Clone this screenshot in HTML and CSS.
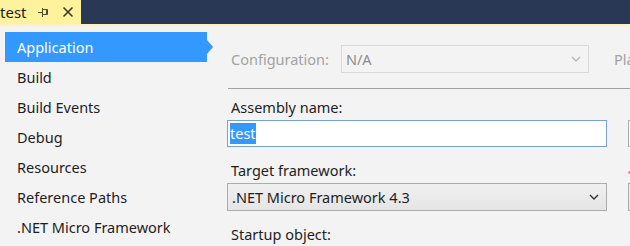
FILE: index.html
```html
<!DOCTYPE html>
<html lang="en">
<head>
    <meta charset="UTF-8">
    <title>test - Properties</title>
    <link rel="stylesheet" href="styles.css">
</head>
<body>
    <div class="tabbar">
        <div class="doc-tab">
            <span class="tab-title">test</span>
            <svg class="pin" width="12" height="12" viewBox="0 0 12 12">
                <path d="M0 6.5h4M4.5 2v9M4.5 3.5h5v5h-5M8.5 3.5v5" stroke="#4d4a30" stroke-width="1" fill="none"/>
            </svg>
            <svg class="close" width="12" height="12" viewBox="0 0 12 12">
                <path d="M1.5 1.5l9 9M10.5 1.5l-9 9" stroke="#3d3a25" stroke-width="1.6" fill="none"/>
            </svg>
        </div>
    </div>
    <div class="tab-line"></div>

    <div class="page">
        <ul class="nav">
            <li class="active">Application</li>
            <li>Build</li>
            <li>Build Events</li>
            <li>Debug</li>
            <li>Resources</li>
            <li>Reference Paths</li>
            <li>.NET Micro Framework</li>
        </ul>

        <div class="content">
            <div class="config-row">
                <span class="muted">Configuration:</span>
                <div class="combo disabled">
                    <span>N/A</span>
                    <svg width="10" height="6" viewBox="0 0 10 6"><path d="M1 1l4 4 4-4" stroke="#b8b8b8" stroke-width="1.3" fill="none"/></svg>
                </div>
                <span class="muted">Platform:</span>
            </div>
            <div class="separator"></div>

            <div class="fields">
                <div class="field">
                    <label>Assembly name:</label>
                    <div class="textbox"><span class="selected">test</span></div>
                </div>
                <div class="field side">
                    <div class="label-gap"></div>
                    <div class="textbox plain"></div>
                </div>

                <div class="field">
                    <label>Target framework:</label>
                    <div class="combo">
                        <span>.NET Micro Framework 4.3</span>
                        <svg width="10" height="6" viewBox="0 0 10 6"><path d="M1 1l4 4 4-4" stroke="#333" stroke-width="1.4" fill="none"/></svg>
                    </div>
                </div>
                <div class="field side">
                    <div class="label-gap"><i class="mark"></i></div>
                    <div class="combo"><i class="mark"></i></div>
                </div>

                <div class="field">
                    <label>Startup object:</label>
                </div>
            </div>
        </div>
    </div>
</body>
</html>
```

FILE: styles.css
```css
* {
    margin: 0;
    padding: 0;
    box-sizing: border-box;
}

body {
    font-family: 'Noto Sans', 'Open Sans', sans-serif;
    font-size: 14.5px;
    color: #1e1e1e;
    background: #f3f3f3;
    width: 630px;
    height: 246px;
    overflow: hidden;
}

.tabbar {
    height: 24px;
    background: #293955;
    display: flex;
}

.doc-tab {
    width: 81px;
    background: #fff29d;
    display: flex;
    align-items: center;
    color: #1e1e1e;
    font-size: 15px;
}

.tab-title {
    margin-right: 12px;
}

.pin {
    margin-right: 12px;
}

.tab-line {
    height: 2px;
    background: #fbf3b8;
}

.page {
    display: flex;
}

.nav {
    list-style: none;
    width: 227px;
    flex-shrink: 0;
    padding-top: 6px;
}

.nav li {
    height: 30px;
    line-height: 31px;
    padding-left: 17px;
}

.nav li.active {
    background: #3399ff;
    color: white;
    margin-left: 5px;
    padding-left: 12px;
    width: 202px;
    position: relative;
}

.nav li.active::after {
    content: '';
    position: absolute;
    right: -6px;
    top: 8px;
    border-left: 6px solid #3399ff;
    border-top: 7px solid transparent;
    border-bottom: 7px solid transparent;
}

.content {
    flex: 1;
    overflow: hidden;
    white-space: nowrap;
}

.muted {
    color: #a2a2a2;
    flex-shrink: 0;
}

.config-row {
    display: flex;
    align-items: center;
    height: 30px;
    margin-top: 18px;
    padding-left: 4px;
}

.config-row .combo {
    width: 248px;
    flex-shrink: 0;
    margin-left: 12px;
    margin-right: 25px;
}

.combo {
    height: 28px;
    border: 1px solid #acacac;
    background: linear-gradient(#f0f0f0, #e5e5e5);
    display: flex;
    align-items: center;
    justify-content: space-between;
    padding: 0 7px 0 4px;
}

.combo.disabled {
    background: #f3f3f3;
    border-color: #d9d9d9;
    color: #8d8d8d;
}

.separator {
    height: 1px;
    background: #a0a0a0;
    margin-top: 14px;
    margin-left: 1px;
}

.fields {
    display: grid;
    grid-template-columns: 380px 1fr;
    column-gap: 18px;
    padding-top: 5px;
}

.field label,
.label-gap {
    display: block;
    height: 26px;
    line-height: 27px;
    padding-left: 4px;
}

.field .combo,
.field .textbox {
    margin-bottom: 10px;
}

.textbox {
    height: 27px;
    border: 1px solid #7a9fd3;
    background: white;
    padding: 2px 2px;
    line-height: 21px;
}

.textbox.plain {
    border-color: #acacac;
}

.selected {
    background: #3399ff;
    color: white;
    display: inline-block;
}

.field.side {
    margin-left: 3px;
}

.label-gap {
    position: relative;
}

.mark {
    display: inline-block;
    width: 3px;
    height: 3px;
    background: #f0a030;
    border-radius: 50%;
}

.label-gap .mark {
    position: absolute;
    left: 0;
    top: 14px;
}
```
